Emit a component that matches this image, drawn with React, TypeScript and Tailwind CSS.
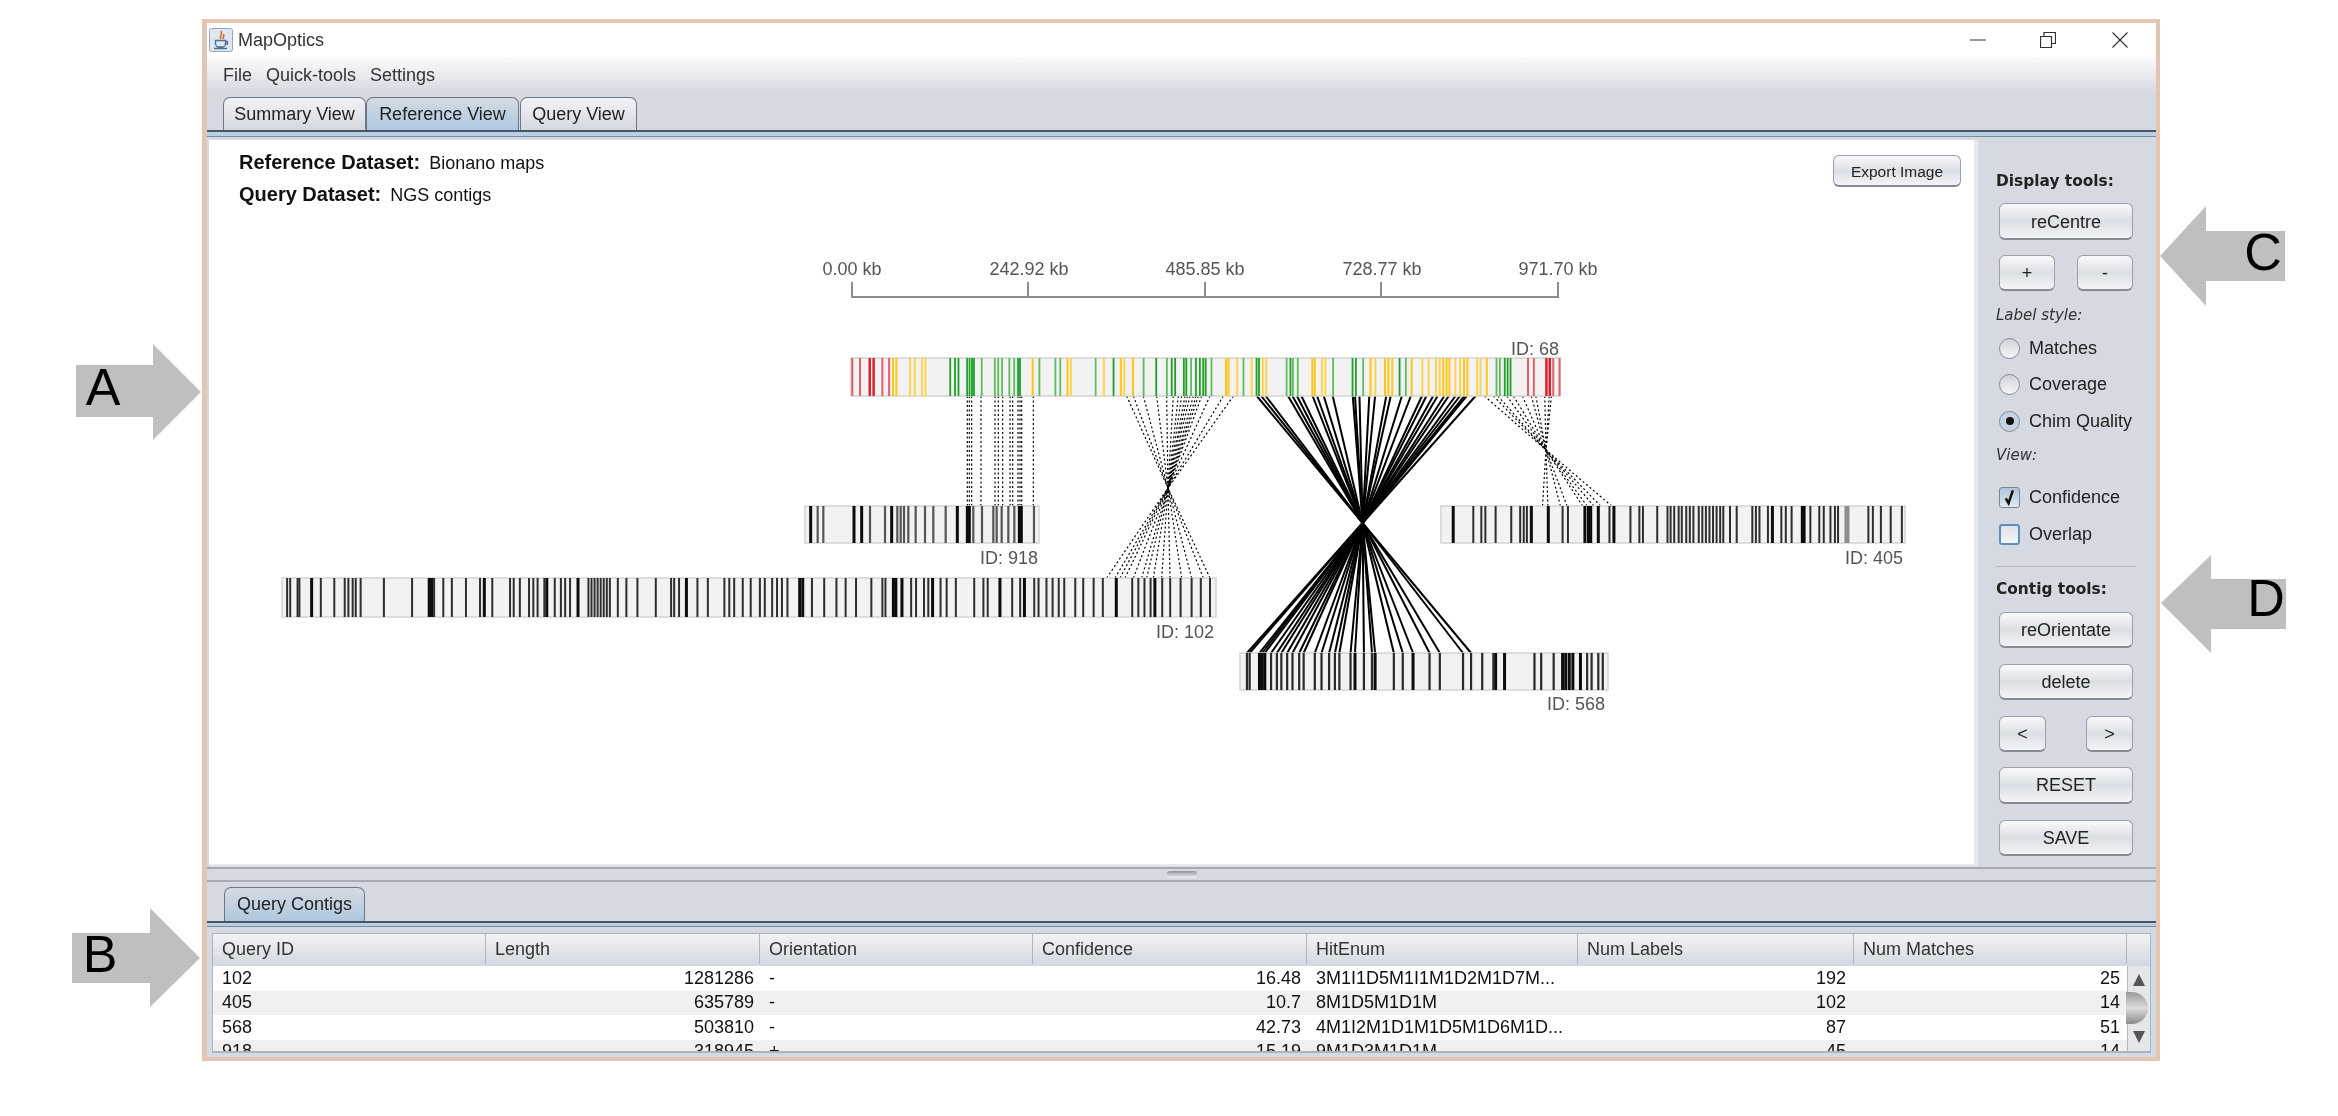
import React from "react";

type Tk = { x: number; w: number; c: string };
const mk = (fx: (z: number) => number, zs: number[], w: number, c: string): Tk[] => zs.map((z) => ({ x: fx(z), w, c }));

const z6 = (z: number) => 830 + z / 2.063;
const z7 = (z: number) => 780 + z / 3;
const z8 = (z: number) => 1230 + z / 2.24;
const z9 = (z: number) => 270 + z / 1.633;

const RD = "#df1f2d", RL = "#e0606a", YD = "#ffc61a", YL = "#ffd34f", GD = "#1f9f27", GL = "#5fbb60";
const refTicks: Tk[] = [
  ...mk(z6, [46, 62, 108, 122, 1440, 1452, 1492, 1505], 2, RL),
  ...mk(z6, [82, 90, 1478, 1485], 2.5, RD),
  ...mk(z6, [130, 137, 418, 490, 600, 625, 817, 822, 995, 1000, 1115, 1145, 1152, 1160, 1200, 1265, 1272, 1278, 1308, 1315, 1355], 2, YD),
  ...mk(z6, [165, 175, 190, 197, 497, 565, 607, 840, 870, 893, 900, 1015, 1022, 1125, 1222, 1235, 1250, 1258, 1290, 1300, 1335, 1342], 2, YL),
  ...mk(z6, [248, 258, 265, 283, 288, 293, 297, 388, 392, 585, 673, 705, 712, 730, 735, 755, 763, 770, 775, 880, 885, 950, 1078, 1085, 1175, 1392, 1398, 1404], 1.8, GD),
  ...mk(z6, [313, 340, 347, 355, 370, 380, 432, 465, 475, 548, 647, 695, 745, 787, 853, 942, 955, 965, 1038, 1100, 1188, 1375, 1382], 1.8, GL),
];

const K = "#0c0c0c", M = "#555", L = "#8d8d8d";
const t918: Tk[] = [
  ...mk(z7, [92, 222, 245, 335, 532, 718, 562, 568, 724], 3, K),
  ...mk(z7, [113, 130, 270, 315, 352, 362, 372, 385, 407, 435, 460, 497, 580, 606, 650, 665, 685, 703, 762, 640], 2.2, M),
];
const t102: Tk[] = [
  ...mk(z9, [68, 260, 264, 350, 452, 503, 680, 865, 870, 1018, 1022, 1032, 1082, 1192, 1232, 1382, 1445], 3, K),
  ...mk(z9, [28, 33, 45, 48, 83, 105, 122, 128, 135, 140, 148, 186, 232, 268, 283, 297, 320, 343, 363, 392, 398, 408, 423, 430, 437, 448, 465, 475, 482, 490, 520, 525, 530, 535, 540, 545, 550, 555, 568, 582, 600, 630, 655, 660, 668, 698, 715, 742, 750, 758, 772, 785, 800, 808, 820, 828, 836, 845, 885, 905, 925, 940, 957, 982, 1000, 1005, 1047, 1055, 1068, 1075, 1095, 1105, 1120, 1150, 1165, 1172, 1212, 1225, 1248, 1255, 1268, 1278, 1288, 1297, 1315, 1328, 1345, 1360, 1408, 1418, 1428, 1438, 1457, 1470, 1487, 1505, 1520, 1535], 2, "#2e2e2e"),
];
const t405: Tk[] = [
  ...mk(z8, [500, 675, 713, 795, 803, 808, 825, 860, 1215, 1282, 1286], 3, K),
  ...mk(z8, [545, 563, 572, 595, 630, 650, 658, 665, 745, 757, 850, 897, 917, 925, 957, 980, 987, 995, 1005, 1012, 1022, 1030, 1038, 1050, 1058, 1066, 1074, 1082, 1090, 1098, 1105, 1120, 1135, 1170, 1178, 1186, 1205, 1235, 1245, 1258, 1300, 1320, 1330, 1345, 1355, 1362, 1430, 1440, 1458, 1480, 1505], 2, "#2e2e2e"),
  ...mk(z8, [1382], 5, L),
];
const t568: Tk[] = [
  ...mk(z8, [66, 72, 78, 280, 325, 595, 615, 410, 745, 752, 760, 768, 785], 3, K),
  ...mk(z8, [38, 44, 92, 105, 115, 128, 140, 155, 165, 190, 205, 222, 235, 245, 270, 300, 318, 367, 387, 447, 470, 522, 540, 565, 590, 682, 697, 725, 800, 810, 825, 835], 2.2, "#2a2a2a"),
];

const Bar = ({ x1, x2, y1, y2, ticks }: { x1: number; x2: number; y1: number; y2: number; ticks: Tk[] }) => (
  <g>
    <rect x={x1} y={y1} width={x2 - x1} height={y2 - y1} fill="#f2f2f2" stroke="#d4d4d4" strokeWidth="1.5" />
    {ticks.map((t, i) => (
      <rect key={i} x={t.x - t.w / 2} y={y1} width={t.w} height={y2 - y1} fill={t.c} />
    ))}
  </g>
);

const Cross = ({ cx, cy, topY, botY, top, bot, dotted }: { cx: number; cy: number; topY: number; botY: number; top: number[]; bot: number[]; dotted?: boolean }) => (
  <g stroke="#000" strokeWidth={dotted ? 1.2 : 2} strokeDasharray={dotted ? "2 2.5" : undefined}>
    {top.map((x, i) => <line key={"t" + i} x1={x} y1={topY} x2={cx} y2={cy} />)}
    {bot.map((x, i) => <line key={"b" + i} x1={x} y1={botY} x2={cx} y2={cy} />)}
  </g>
);

const Diagram = () => (
  <svg viewBox="209 230 1765 634" className="block shrink-0 w-[1765px] h-[634px] blur-[0.3px]" fontFamily="'Liberation Sans', sans-serif">
    <g stroke="#8c8c8c" strokeWidth="2" fill="none">
      <path d="M852 282V297H1558V282M1028 282V297M1205 282V297M1381 282V297" />
    </g>
    <g fontSize="18" fill="#555" textAnchor="middle">
      <text x="852" y="275">0.00 kb</text>
      <text x="1029" y="275">242.92 kb</text>
      <text x="1205" y="275">485.85 kb</text>
      <text x="1382" y="275">728.77 kb</text>
      <text x="1558" y="275">971.70 kb</text>
    </g>
    <g stroke="#000" strokeWidth="1.2" strokeDasharray="2 2.5">
      {[562, 568, 575, 603, 645, 655, 668, 690, 698, 714, 720, 725, 760].map((z) => (
        <line key={z} x1={z7(z)} x2={z7(z)} y1={396} y2={506} />
      ))}
    </g>
    <Cross dotted cx={1168} cy={488} topY={396} botY={578}
      top={[1040, 1060, 1090, 1130, 1160, 1180, 1205, 1215, 1230, 1240, 1255, 1265, 1290, 1330, 1360, 1195, 1222, 1248].map(z7)}
      bot={[980, 1005, 1020, 1035, 1060, 1085, 1100, 1120, 1145, 1170, 1205, 1235, 1270, 1290].map(z7)} />
    <Cross cx={1362.6} cy={523} topY={396} botY={653}
      top={[60, 70, 80, 130, 140, 150, 160, 185, 195, 210, 230, 275, 280, 290, 312, 325, 350, 360, 385, 405, 430, 440, 455, 465, 480, 490, 505, 515, 525, 530, 550].map(z8)}
      bot={[38, 44, 66, 72, 78, 92, 105, 115, 128, 140, 155, 165, 190, 205, 222, 235, 245, 270, 280, 300, 318, 325, 367, 387, 410, 447, 470, 522, 540].map(z8)} />
    <Cross dotted cx={1546} cy={450} topY={396} botY={506}
      top={[570, 590, 600, 620, 635, 655, 675, 685, 705, 715, 720].map(z8)}
      bot={[700, 712, 740, 755, 790, 800, 815, 830, 855].map(z8)} />
    <Bar x1={851} x2={1560} y1={358} y2={396} ticks={refTicks} />
    <Bar x1={805} x2={1039} y1={506} y2={543} ticks={t918} />
    <Bar x1={282} x2={1216} y1={578} y2={617} ticks={t102} />
    <Bar x1={1441} x2={1905} y1={506} y2={543} ticks={t405} />
    <Bar x1={1240} x2={1608} y1={653} y2={690} ticks={t568} />
    <g fontSize="18" fill="#555" textAnchor="end">
      <text x="1559" y="355">ID: 68</text>
      <text x="1038" y="564">ID: 918</text>
      <text x="1214" y="638">ID: 102</text>
      <text x="1903" y="564">ID: 405</text>
      <text x="1605" y="710">ID: 568</text>
    </g>
  </svg>
);

const Btn = ({ children, className = "" }: { children: React.ReactNode; className?: string }) => (
  <button className={"flex items-center justify-center pt-[2px] rounded-[6px] border border-[#9a9fa8] border-b-2 border-b-[#858a93] bg-linear-to-b from-[#f8f9fb] via-[#dcdfe5] to-[#f2f4f8] text-[18px] text-[#222] " + className}>
    {children}
  </button>
);

const Radio = ({ label, on }: { label: string; on?: boolean }) => (
  <div className="flex items-center h-[36.5px] pl-[21px]">
    <span className={"flex items-center justify-center w-[21px] h-[21px] rounded-full border border-[#858b95] " + (on ? "bg-[#c3d3e4]" : "bg-linear-to-b from-[#cfd3da] to-[#f6f7f9]")}>
      {on && <span className="w-[8px] h-[8px] rounded-full bg-[#111]" />}
    </span>
    <span className="ml-[9px] text-[18px] text-[#222]">{label}</span>
  </div>
);

const Check = ({ label, on, h, focus }: { label: string; on?: boolean; h: string; focus?: boolean }) => (
  <div className={"flex items-center pl-[21px] " + h}>
    <span className={"relative flex items-center justify-center w-[21px] h-[21px] rounded-[3px] border " + (focus ? "border-[#5f8fc0] border-2 bg-linear-to-b from-[#dfe2e8] to-[#f4f5f8]" : "border-[#7d848f] bg-linear-to-b from-[#aec3d8] to-[#e4ebf2]")}>
      {on && (
        <svg viewBox="0 0 20 20" className="w-[20px] h-[20px]"><path d="M6 10.5l3 5L13.5 2" fill="none" stroke="#111" strokeWidth="2.6" /></svg>
      )}
    </span>
    <span className="ml-[9px] text-[18px] text-[#222]">{label}</span>
  </div>
);

const H = ({ children, className = "" }: { children: React.ReactNode; className?: string }) => (
  <div className={"ml-[18px] h-[20px] leading-[20px] font-['DejaVu_Sans',sans-serif] font-bold text-[15.4px] text-[#222] " + className}>{children}</div>
);
const I = ({ children, className = "" }: { children: React.ReactNode; className?: string }) => (
  <div className={"ml-[18px] h-[20px] leading-[20px] font-['DejaVu_Sans',sans-serif] italic text-[15px] text-[#333] " + className}>{children}</div>
);

const Side = () => (
  <div className="w-[178px] pt-[34px] flex flex-col">
    <H>Display tools:</H>
    <Btn className="ml-[21px] mt-[12px] w-[134px] h-[37px]">reCentre</Btn>
    <div className="ml-[21px] mt-[15px] w-[134px] flex justify-between">
      <Btn className="w-[56px] h-[36px]">+</Btn>
      <Btn className="w-[56px] h-[36px]">-</Btn>
    </div>
    <I className="mt-[14px]">Label style:</I>
    <div className="mt-[5px]">
      <Radio label="Matches" />
      <Radio label="Coverage" />
      <Radio label="Chim Quality" on />
    </div>
    <I className="mt-[5px]">View:</I>
    <div className="mt-[14px]">
      <Check label="Confidence" on h="h-[38px]" />
      <Check label="Overlap" h="h-[36px]" focus />
    </div>
    <div className="ml-[18px] mt-[13px] w-[140px] h-px bg-[#b4b9c2]" />
    <H className="mt-[12px]">Contig tools:</H>
    <Btn className="ml-[21px] mt-[13px] w-[134px] h-[36px]">reOrientate</Btn>
    <Btn className="ml-[21px] mt-[16px] w-[134px] h-[36px]">delete</Btn>
    <div className="ml-[21px] mt-[16px] w-[134px] flex justify-between">
      <Btn className="w-[47px] h-[36px]">&lt;</Btn>
      <Btn className="w-[47px] h-[36px]">&gt;</Btn>
    </div>
    <Btn className="ml-[21px] mt-[15px] w-[134px] h-[37px]">RESET</Btn>
    <Btn className="ml-[21px] mt-[16px] w-[134px] h-[36px]">SAVE</Btn>
  </div>
);

const Tab = ({ children, active, className = "" }: { children: React.ReactNode; active?: boolean; className?: string }) => (
  <div className={"flex items-center justify-center h-full rounded-t-[7px] border border-b-0 border-[#6f7683] text-[18px] text-[#222] " + (active ? "bg-linear-to-b from-[#d5dae3] to-[#aec8de] " : "bg-linear-to-b from-[#f2f3f6] to-[#d5d8df] ") + className}>
    {children}
  </div>
);

const Band = ({ h }: { h: string }) => (
  <div className={"shrink-0 bg-[#b9cfe4] border-t-2 border-t-[#4c5567] border-b border-b-[#7a8aa0] " + h} />
);

const cols = ["w-[273px]", "w-[274px]", "w-[273px]", "w-[274px]", "w-[271px]", "w-[276px]", "w-[273px]"];
const heads = ["Query ID", "Length", "Orientation", "Confidence", "HitEnum", "Num Labels", "Num Matches"];
const rows = [
  ["102", "1281286", "-", "16.48", "3M1I1D5M1I1M1D2M1D7M...", "192", "25"],
  ["405", "635789", "-", "10.7", "8M1D5M1D1M", "102", "14"],
  ["568", "503810", "-", "42.73", "4M1I2M1D1M1D5M1D6M1D...", "87", "51"],
  ["918", "318945", "+", "15.19", "9M1D3M1D1M", "45", "14"],
];
const cellCls = ["pl-[9px]", "text-right pr-[6px]", "pl-[9px]", "text-right pr-[6px]", "pl-[9px]", "text-right pr-[8px]", "text-right pr-[7px]"];

const Table = () => (
  <div className="mx-[5px] mt-[6px] h-[120px] w-[1939px] border-b-2 border-x border-[#aeb3bc] flex flex-col overflow-hidden">
    <div className="flex h-[33px] shrink-0 pb-[2px] bg-linear-to-b from-[#f2f3f6] to-[#d3d7df] border-t border-[#aeb3bc]">
      {heads.map((h, i) => (
        <div key={h} className={cols[i] + " pl-[9px] flex items-center text-[18px] text-[#333] border-r border-[#b0b5be]"}>{h}</div>
      ))}
      <div className="flex-1" />
    </div>
    <div className="flex flex-1 min-h-0">
      <div className="w-[1914px] overflow-hidden bg-white">
        {rows.map((r, ri) => (
          <div key={ri} className={"flex h-[24.5px] items-center text-[18px] text-[#111] " + (ri % 2 ? "bg-[#f0f0f0]" : "bg-white")}>
            {r.map((c, i) => (
              <div key={i} className={cols[i] + " " + cellCls[i]}>{c}</div>
            ))}
          </div>
        ))}
      </div>
      <div className="relative flex-1 bg-[#e4e6ea] border-l border-[#b0b5be] flex flex-col items-center justify-between py-[8px] text-[#555]">
        <svg viewBox="0 0 10 10" className="w-[12px] h-[12px]"><path d="M5 0L10 10H0z" fill="#555" /></svg>
        <span className="absolute -left-[2px] top-[26px] w-[22px] h-[32px] rounded-r-full bg-linear-to-b from-[#9a9a9a] via-[#dcdcdc] to-[#8c8c8c]" />
        <svg viewBox="0 0 10 10" className="w-[12px] h-[12px]"><path d="M5 10L10 0H0z" fill="#555" /></svg>
      </div>
    </div>
  </div>
);

const Arrow = ({ points, letter, lx, ly }: { points: string; letter: string; lx: number; ly: number }) => (
  <svg viewBox="0 0 2338 1116" className="absolute left-0 top-0 w-[2338px] h-[1116px] pointer-events-none">
    <polygon points={points} fill="#bfbfbf" />
    <text x={lx} y={ly} fontSize="52" textAnchor="middle" fill="#000" fontFamily="'Liberation Sans', sans-serif">{letter}</text>
  </svg>
);

export default function App() {
  return (
    <div className="relative w-[2338px] h-[1116px] bg-white overflow-hidden pt-[19px] pl-[202px] font-['Liberation_Sans',sans-serif]">
      <div className="w-[1958px] h-[1042px] border-4 border-l-[5px] border-[#e3c5b1] bg-[#d5d9e2] flex flex-col blur-[0.4px]">
        <div className="h-[34px] shrink-0 bg-white flex items-center pl-[2px] relative">
          <svg viewBox="0 0 24 24" className="w-[24px] h-[24px]">
            <rect x="0.5" y="0.5" width="23" height="23" rx="2" fill="#dfe6ef" stroke="#9aa6b6" />
            <path d="M12 3c2 3-2 4 0 8M14.5 6c1 2-1 3 0 5" stroke="#d9651e" strokeWidth="1.6" fill="none" />
            <path d="M6.5 12.5h10v3a3.5 3.5 0 0 1-3.5 3.5h-3a3.5 3.5 0 0 1-3.5-3.5zM16.5 13.5h2v2.5h-2M5 20.5h13" stroke="#4a6f96" strokeWidth="1.3" fill="none" />
          </svg>
          <span className="ml-[5px] text-[18px] text-[#333]">MapOptics</span>
          <div className="ml-auto flex items-center mr-[28px]">
            <svg viewBox="0 0 16 16" className="w-[16px] h-[16px]"><path d="M0 8h16" stroke="#333" strokeWidth="1" /></svg>
            <svg viewBox="0 0 16 16" className="ml-[54px] w-[16px] h-[16px]"><path d="M0.5 4.5h11v11h-11zM4 4.5V0.5h11.5v11H11.5" stroke="#333" strokeWidth="1.2" fill="none" /></svg>
            <svg viewBox="0 0 16 16" className="ml-[56px] w-[16px] h-[16px]"><path d="M0.5 0.5l15 15M15.5 0.5l-15 15" stroke="#333" strokeWidth="1.2" /></svg>
          </div>
        </div>
        <div className="h-[35px] shrink-0 bg-linear-to-b from-[#fbfbfc] to-[#d7dae2] flex items-center pl-[16px] gap-[14px] pt-[2px] text-[18px] text-[#333]">
          <span>File</span><span>Quick-tools</span><span>Settings</span>
        </div>
        <div className="h-[38px] shrink-0 pt-[5px] pl-[16px] flex">
          <Tab className="w-[143px]">Summary View</Tab>
          <Tab active className="w-[153px]">Reference View</Tab>
          <Tab className="w-[117px] ml-[1px]">Query View</Tab>
        </div>
        <Band h="h-[7px]" />
        <div className="h-[730px] shrink-0 flex">
          <div className="ml-[2px] mt-[3px] mb-[1px] w-[1769px] shrink-0 bg-white border-r-4 border-r-[#e7e9ee] border-b-2 border-b-[#e7e9ee] flex flex-col overflow-hidden">
            <div className="h-[90px] shrink-0 flex justify-between pl-[30px] pr-[13px] pt-[15px]">
              <div className="-mt-[8px] text-[20px] leading-[31px] text-[#111]">
                <div><b>Reference Dataset:</b><span className="ml-[9px] text-[18px]">Bionano maps</span></div>
                <div><b>Query Dataset:</b><span className="ml-[9px] text-[18px]">NGS contigs</span></div>
              </div>
              <Btn className="w-[128px] h-[32px] !text-[15.5px]">Export Image</Btn>
            </div>
            <Diagram />
          </div>
          <Side />
        </div>
        <div className="h-[15px] shrink-0 border-t-2 border-b-2 border-[#a5aab3] flex justify-center items-center">
          <span className="w-[30px] h-[7px] rounded-t-[3px] bg-linear-to-b from-[#8f949d] to-[#f4f5f7]" />
        </div>
        <div className="h-[39px] shrink-0 pt-[5px] pl-[17px] flex">
          <Tab active className="w-[141px]">Query Contigs</Tab>
        </div>
        <Band h="h-[6px]" />
        <Table />
      </div>
      <Arrow points="76,365 153,365 153,344 201,392 153,440 153,417 76,417" letter="A" lx={103} ly={405} />
      <Arrow points="72,933 150,933 150,908 200,958 150,1007 150,983 72,983" letter="B" lx={100} ly={972} />
      <Arrow points="2160,256 2206,206 2206,231 2285,231 2285,281 2206,281 2206,306" letter="C" lx={2263} ly={270} />
      <Arrow points="2161,603 2211,555 2211,579 2286,579 2286,629 2211,629 2211,653" letter="D" lx={2266} ly={616} />
    </div>
  );
}
